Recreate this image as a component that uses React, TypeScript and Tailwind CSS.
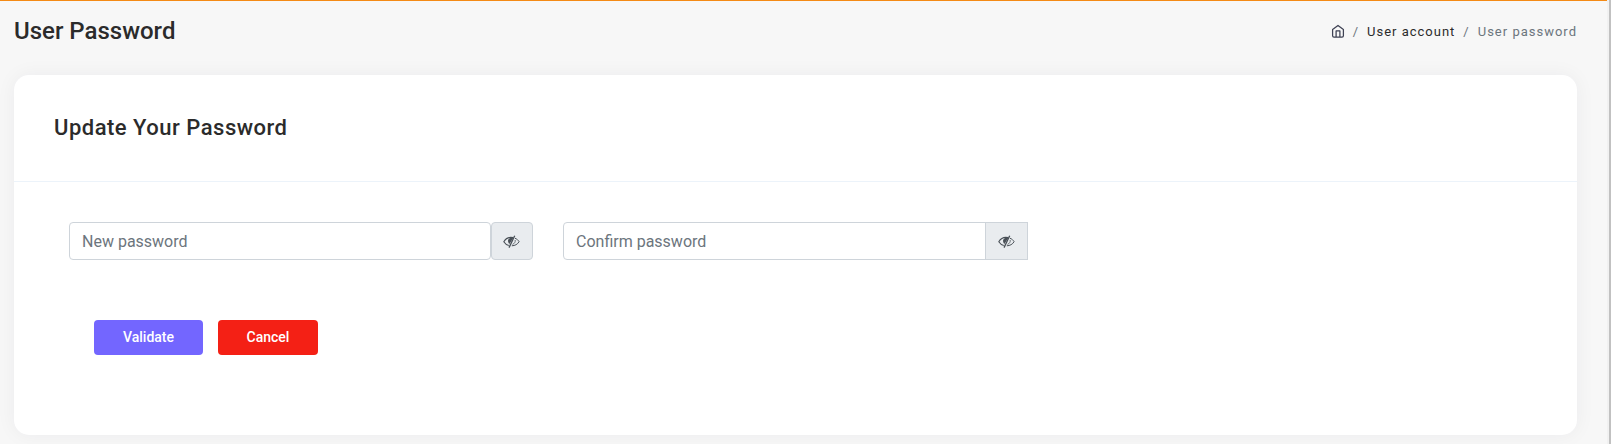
function EyeBlocked() {
  return (
    <svg className="mt-0.5 mr-px" width="17" height="14" viewBox="0 0 17 14" fill="none" stroke="#495057">
      <path d="M10 2.6C5 1.5 2.3 4.2.8 6.7c1.2 1.9 2.8 3.2 5 3.8" strokeWidth="1.1" />
      <path d="M11.9 3.2c2 .7 3.3 2 4.2 3.5-1.6 2.6-4 4-7.3 4.1" strokeWidth="1" />
      <path d="M10.3 2.9C6.4 2.2 4.6 4.4 5.1 6.6c.2 1.1.7 1.8 1.3 2.3z" fill="#495057" stroke="none" />
      <path d="M12.2 5c.3 2-.8 3.7-2.7 4.4" strokeWidth=".8" />
      <path d="M11.7.8 6 12.6" strokeWidth="1.3" />
    </svg>
  );
}

function HomeIcon() {
  return (
    <svg className="mt-[3px]" width="14" height="14" viewBox="0 0 14 14" fill="none" stroke="#3f4254" strokeWidth="1.25" strokeLinejoin="round">
      <path d="M1.6 5.4 7 1.4l5.4 4v6.3a1.4 1.4 0 0 1-1.4 1.4H3a1.4 1.4 0 0 1-1.4-1.4z" />
      <path d="M5.1 13.1V6.9h3.8v6.2" />
    </svg>
  );
}

function PasswordField({ label, inputClass, addonClass }: { label: string; inputClass: string; addonClass: string }) {
  return (
    <div className="flex h-[38px]">
      <input
        type="password"
        placeholder={label}
        className={`border border-[#ced4da] bg-white px-3 pt-0.5 text-base text-[#495057] outline-none placeholder:text-[#6c757d] ${inputClass}`}
      />
      <button
        type="button"
        aria-label="Show password"
        className={`flex items-center justify-center border border-[#ced4da] bg-[#e9ecef] ${addonClass}`}
      >
        <EyeBlocked />
      </button>
    </div>
  );
}

export default function App() {
  return (
    <div className="flex h-[444px] w-full overflow-hidden bg-[#f7f7f7] font-['Roboto',sans-serif] text-[#2b2b2b]">
      <main className="min-w-0 flex-1">
        <div className="h-px bg-[#f48a15] shadow-[0_0_20px_rgba(8,21,66,0.08)]" />
        <header className="flex h-[74px] items-start justify-between pr-[30px] pl-3.5">
          <h1 className="mt-[12px] text-2xl leading-9 font-medium">User Password</h1>
          <nav className="mt-[20px] flex items-start text-[13px] leading-5 tracking-[1px] text-[#6c757d]">
            <HomeIcon />
            <span className="mx-2 mt-px">/</span>
            <a className="mt-px text-[#2b2b2b]">User account</a>
            <span className="mx-2 mt-px">/</span>
            <span className="mt-px">User password</span>
          </nav>
        </header>
        <section className="mr-[30px] ml-3.5 h-[360px] rounded-[15px] bg-white shadow-[0_0_20px_rgba(8,21,66,0.05)]">
          <div className="h-[107px] border-b border-[#ecf3fa] px-10 pt-10">
            <h2 className="text-[22px] leading-[26px] font-medium tracking-[0.5px]">Update Your Password</h2>
          </div>
          <div className="flex gap-[30px] pt-10 pl-[55px]">
            <PasswordField label="New password" inputClass="w-[422px] rounded" addonClass="w-[42px] rounded" />
            <PasswordField label="Confirm password" inputClass="w-[423px] rounded-l" addonClass="-ml-px w-[43px]" />
          </div>
          <div className="flex gap-[15px] pt-[60px] pl-20 text-sm font-medium text-white">
            <button className="h-[35px] w-[109px] rounded bg-[#7366ff] pb-px">Validate</button>
            <button className="h-[35px] w-[100px] rounded bg-[#f42015] pb-px">Cancel</button>
          </div>
        </section>
      </main>
      <div className="w-1 border-r-2 border-l-2 border-[#c1c1c1] border-l-[#f1f1f1]" />
    </div>
  );
}
